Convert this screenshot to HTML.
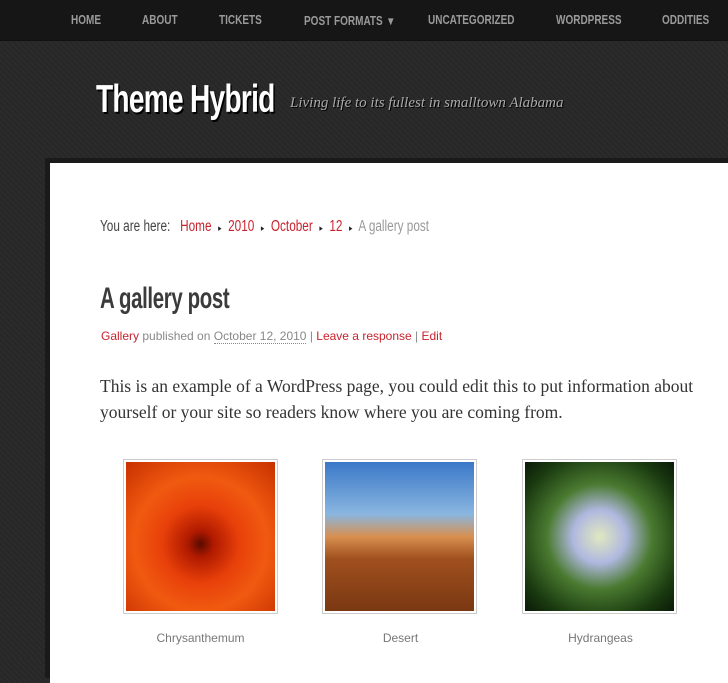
<!DOCTYPE html>
<html><head><meta charset="utf-8"><style>
body{margin:0;width:728px;height:658px;overflow:hidden;background:repeating-linear-gradient(45deg,#272727 0 2px,#2b2b2b 2px 4px);font-family:"Liberation Sans",sans-serif;position:relative}
.nav{position:absolute;left:0;top:0;width:728px;height:40px;background:#161616;box-shadow:0 1px 0 #111}
.nav span{position:absolute;top:13px;font-size:12.5px;font-weight:bold;color:#9a9a9a;transform:scaleX(.8);transform-origin:left}
.title{position:absolute;left:96px;top:78px;font-size:39px;font-weight:bold;color:#fff;transform:scaleX(.72);transform-origin:left;text-shadow:2px 2px 0 #000;letter-spacing:-1px}
.desc{position:absolute;left:290px;top:95px;font-family:"Liberation Serif",serif;font-style:italic;font-size:15px;color:#aaa;text-shadow:1px 1px 0 #000}
.frame{position:absolute;left:45px;top:158px;width:700px;height:520px;background:#1a1a1a}
.page{position:absolute;left:50px;top:163px;width:700px;height:520px;background:#fff}
.c{position:absolute;white-space:nowrap}
.bc{top:218px;left:100px;font-size:15.5px;color:#444;transform:scaleX(.76);transform-origin:left}
.r{color:#c8232c}
.h1{left:100px;top:282px;font-size:30px;font-weight:bold;color:#3b3b3b;transform:scaleX(.68);transform-origin:left;letter-spacing:-.5px}
.meta{left:101px;top:329px;font-size:12px;color:#888}
.p{left:100px;top:373px;font-family:"Liberation Serif",serif;font-size:17.5px;line-height:26px;color:#333;white-space:normal;width:610px}
.img{position:absolute;top:459px;width:153px;height:153px;border:1px solid #ccc;background:#fff}
.img div{position:absolute;left:2px;top:2px;width:149px;height:149px}
.cap{position:absolute;top:631px;font-size:12px;color:#777;width:155px;text-align:center}
</style></head><body>
<div class="nav">
<span style="left:71px">HOME</span><span style="left:142px">ABOUT</span><span style="left:219px">TICKETS</span><span style="left:304px">POST FORMATS &nbsp;▾</span><span style="left:428px">UNCATEGORIZED</span><span style="left:556px">WORDPRESS</span><span style="left:662px">ODDITIES</span>
</div>
<div class="title">Theme Hybrid</div>
<div class="desc">Living life to its fullest in smalltown Alabama</div>
<div class="frame"></div>
<div class="page"></div>
<div class="c bc">You are here: &nbsp; <span class="r">Home</span> &nbsp;<span style="font-size:9px;color:#222">▸</span>&nbsp; <span class="r">2010</span> &nbsp;<span style="font-size:9px;color:#222">▸</span>&nbsp; <span class="r">October</span> &nbsp;<span style="font-size:9px;color:#222">▸</span>&nbsp; <span class="r">12</span> &nbsp;<span style="font-size:9px;color:#222">▸</span>&nbsp; <span style="color:#999">A gallery post</span></div>
<div class="c h1">A gallery post</div>
<div class="c meta"><span class="r">Gallery</span> published on <span style="border-bottom:1px dotted #888">October 12, 2010</span> | <span class="r">Leave a response</span> | <span class="r">Edit</span></div>
<div class="c p">This is an example of a WordPress page, you could edit this to put information about yourself or your site so readers know where you are coming from.</div>
<div class="img" style="left:123px"><div style="background:radial-gradient(circle at 50% 55%,#5a0a00 0,#b01a00 12%,#e8400a 35%,#f05a10 60%,#c83000 100%)"></div></div>
<div class="img" style="left:322px"><div style="background:linear-gradient(#3a78c8 0,#8ab6e0 35%,#d89050 50%,#a0501e 65%,#7a3812 100%)"></div></div>
<div class="img" style="left:522px"><div style="background:radial-gradient(circle at 50% 50%,#e0e8c0 0,#b0b8e0 25%,#4a7a30 50%,#1a3a10 80%,#0a1a08 100%)"></div></div>
<div class="cap" style="left:123px">Chrysanthemum</div>
<div class="cap" style="left:323px">Desert</div>
<div class="cap" style="left:523px">Hydrangeas</div>
</body></html>
